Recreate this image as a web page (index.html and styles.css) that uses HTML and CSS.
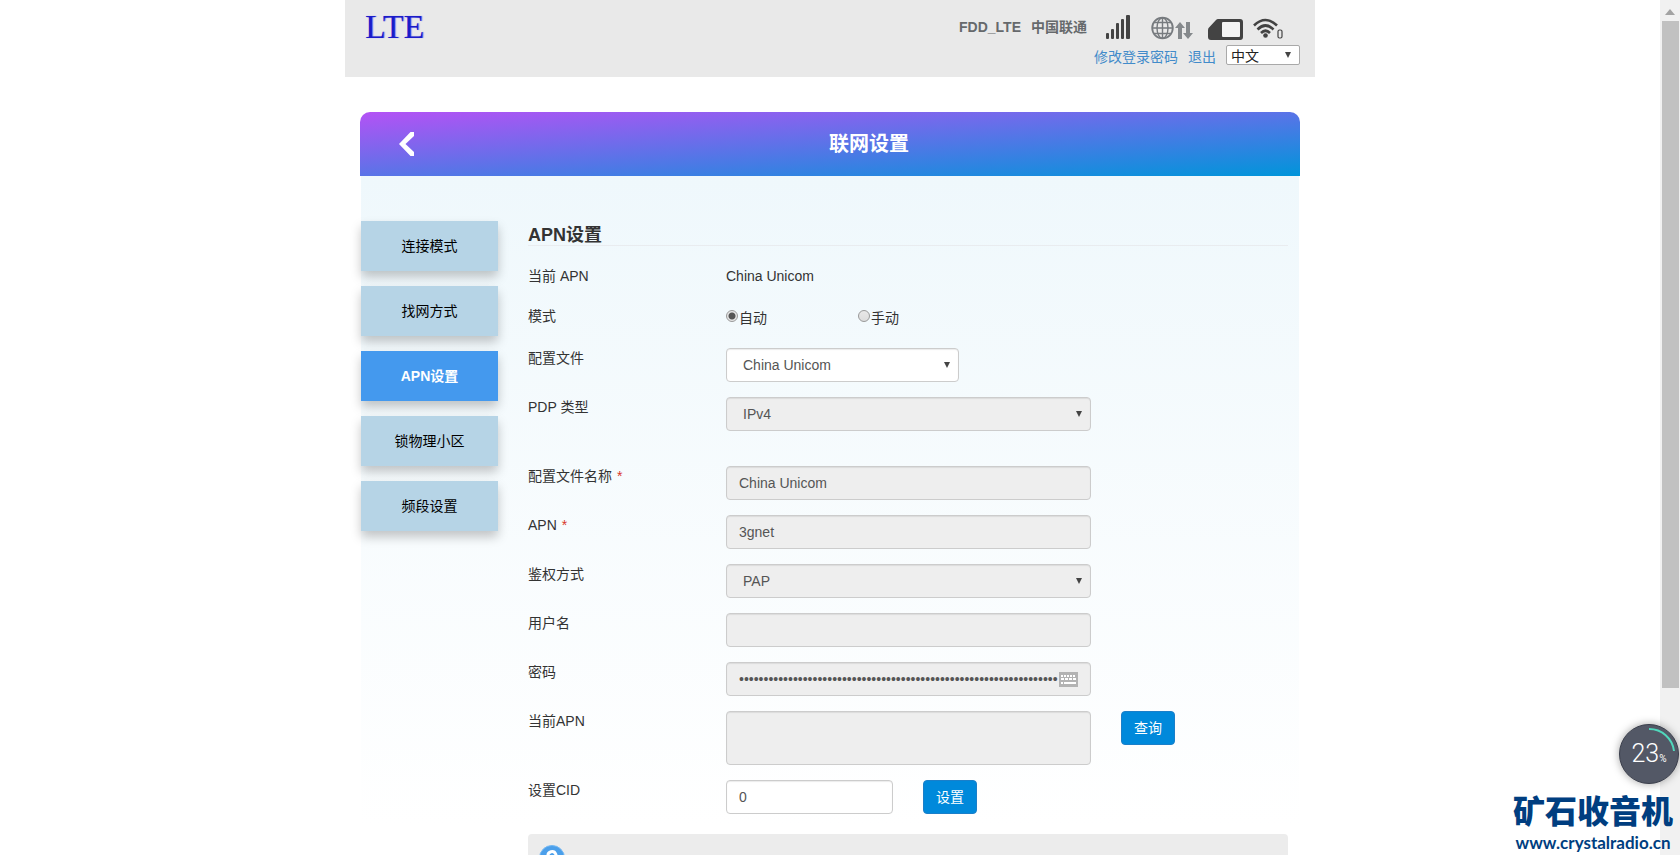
FILE: index.html
```html
<!DOCTYPE html>
<html lang="zh-CN">
<head>
<meta charset="utf-8">
<title>联网设置</title>
<link rel="stylesheet" href="styles.css">
</head>
<body>
<div class="window">
  <div class="page">
    <header class="topbar">
      <div class="logo">LTE</div>
      <div class="tools">
        <div class="status">
          <span>FDD_LTE</span>
          <span>中国联通</span>
          <svg class="signal" width="24" height="24" viewBox="0 0 24 24" aria-hidden="true"><g fill="#434343"><rect x="0" y="18" width="3" height="6" rx="1"/><rect x="5" y="14" width="3" height="10" rx="1"/><rect x="10" y="8" width="3" height="16" rx="1"/><rect x="15" y="4" width="3" height="20" rx="1"/><rect x="20" y="0" width="4" height="24" rx="1"/></g></svg>
          <svg class="globe" width="42" height="24" viewBox="0 0 42 24" aria-hidden="true"><g fill="none" stroke="#777b7f" stroke-width="1.4"><circle cx="11.500" cy="12" r="10.300" stroke-width="1.800"/><ellipse cx="11.500" cy="12" rx="5.500" ry="10.300"/><path d="M11.500 2v20M1 12h21M3 6.500h17M3 17.500h17"/></g><path fill="#85898c" d="M29 6l5 6h-3v11h-4V12h-3zM37 23l-5-6h3V6h4v11h3z"/></svg>
          <svg class="sim" width="36" height="22" viewBox="0 0 36 22" aria-hidden="true"><path fill="#434343" d="M10 0h22a3 3 0 0 1 3 3v15a3 3 0 0 1-3 3H3a3 3 0 0 1-3-3V11Q0 9 1.500 8L8 1Q9 0 10 0z"/><rect x="14" y="3" width="18" height="15" rx="1" fill="#f4f4f4"/></svg>
          <svg class="wifi" width="30" height="22" viewBox="0 0 30 22" aria-hidden="true"><g fill="none" stroke="#434343" stroke-width="2.600"><path d="M1 7.500Q12.500-3.500 24 7.500"/><path d="M4.500 11.500Q12.500 3.500 20.500 11.500"/><path d="M8 15Q12.500 10.500 17 15"/></g><circle cx="12.500" cy="17.500" r="2.300" fill="#434343"/><rect x="25" y="12" width="4" height="8" rx="1.500" fill="none" stroke="#434343" stroke-width="1.200"/></svg>
        </div>
        <nav class="account">
          <a href="#password">修改登录密码</a>
          <a href="#logout">退出</a>
          <span class="pick pick-lang"><select aria-label="语言"><option>中文</option></select></span>
        </nav>
      </div>
    </header>

    <main class="panel">
      <div class="panel-head">
        <a class="back" href="#back" aria-label="返回"><svg width="16" height="24" viewBox="0 0 16 24"><path fill="#fff" d="M11.500 0H15V4L6.500 12L15 20v4h-3.500L0 12z"/></svg></a>
        <h1>联网设置</h1>
      </div>
      <div class="panel-body">
        <nav class="menu">
          <a href="#mode">连接模式</a>
          <a href="#search">找网方式</a>
          <a class="active" href="#apn">APN设置</a>
          <a href="#lock">锁物理小区</a>
          <a href="#band">频段设置</a>
        </nav>
        <form class="form">
          <h2>APN设置</h2>
          <div class="row row-text"><span class="label">当前 APN</span><span>China Unicom</span></div>
          <div class="row row-radio"><span class="label">模式</span>
            <label class="radio"><input type="radio" name="mode" checked>自动</label>
            <label class="radio"><input type="radio" name="mode">手动</label>
          </div>
          <div class="row"><label class="label" for="profile">配置文件</label><span class="pick pick-short"><select class="field" id="profile"><option>China Unicom</option></select></span></div>
          <div class="row row-gap"><label class="label" for="pdp">PDP 类型</label><span class="pick"><select class="field" id="pdp" disabled><option>IPv4</option></select></span></div>
          <div class="row"><label class="label" for="name">配置文件名称 <i>*</i></label><input class="field" id="name" type="text" value="China Unicom" disabled></div>
          <div class="row"><label class="label" for="apn">APN <i>*</i></label><input class="field" id="apn" type="text" value="3gnet" disabled></div>
          <div class="row"><label class="label" for="auth">鉴权方式</label><span class="pick"><select class="field" id="auth" disabled><option>PAP</option></select></span></div>
          <div class="row"><label class="label" for="user">用户名</label><input class="field" id="user" type="text" disabled></div>
          <div class="row"><label class="label" for="pass">密码</label><span class="secret"><input class="field" id="pass" type="password" autocomplete="off" value="00000000000000000000000000000000000000000000000000000000000000000" disabled><svg class="keys" width="19" height="15" viewBox="0 0 19 15" aria-hidden="true"><path fill="#b3b3b3" d="M0 0h19v15H0z"/><g fill="none" stroke="#fff" stroke-width="2"><path d="M2 4h15" stroke-dasharray="2 1"/><path d="M2 7h15" stroke-dasharray="3 1"/><path d="M2 11h2M5 11h12"/></g></svg></span></div>
          <div class="row"><label class="label" for="current">当前APN</label><textarea class="field" id="current" disabled></textarea><button class="btn" type="button">查询</button></div>
          <div class="row"><label class="label" for="cid">设置CID</label><input class="field field-cid" id="cid" type="text" value="0"><button class="btn" type="button">设置</button></div>
          <div class="help"><svg width="26" height="26" viewBox="0 0 26 26" aria-hidden="true"><circle cx="13" cy="13" r="12.500" fill="#4b9fea" stroke="#72b7f2"/><path d="M9 11a4 4 0 1 1 6 3q-2 1-2 3" fill="none" stroke="#fff" stroke-width="3"/><circle cx="13" cy="21" r="2" fill="#fff"/></svg></div>
        </form>
      </div>
    </main>
  </div>

  <div class="scroll" aria-hidden="true"><svg width="10" height="6" viewBox="0 0 10 6"><path fill="#a3a3a3" d="M5 0l5 6H0z"/></svg><div class="thumb"></div></div>

  <div class="ball">
    <svg class="arc" width="60" height="60" viewBox="0 0 60 60" aria-hidden="true"><path d="M30 5a25 25 0 0 1 25 22" fill="none" stroke="#50d8bc" stroke-width="2"/></svg>
    <span>23</span><small>%</small>
  </div>
  <div class="mark"><b>矿石收音机</b><span>www.crystalradio.cn</span></div>
</div>
</body>
</html>
```

FILE: styles.css
```css
* { box-sizing: border-box; }
body {
  margin: 0;
  background: #fff;
  color: #333;
  font: 14px/20px "Liberation Sans", "Noto Sans CJK SC", sans-serif;
}
input, select, textarea, button { font: inherit; color: inherit; margin: 0; }
a { color: #428bca; text-decoration: none; }
.window { display: flex; height: 100vh; overflow: hidden; position: relative; }
.page { flex: 1; min-width: 0; }

/* header */
.topbar {
  display: flex;
  justify-content: space-between;
  max-width: 970px;
  height: 77px;
  margin: 0 auto;
  padding: 8px 15px 0 20px;
  background: #e9e9e9;
}
.logo {
  color: #1c1cc8;
  font: 34px/38px "Liberation Serif", serif;
  text-shadow: 1px 0 1px #8080f0;
}
.tools { display: flex; flex-direction: column; align-items: flex-end; }
.status { display: flex; align-items: center; height: 37px; padding-right: 17px; color: #66696c; font-weight: bold; }
.status span { margin-right: 10px; }
.status .signal { margin-left: 9px; margin-top: 1px; }
.globe { margin-left: 21px; margin-top: 3px; }
.sim { margin-left: 15px; margin-top: 6px; }
.wifi { margin-left: 9px; margin-top: 4px; }
.account { display: flex; align-items: flex-start; gap: 10px; }
.account a { padding-top: 2px; }
.pick { position: relative; display: block; width: 365px; }
.pick::after {
  content: "";
  position: absolute;
  right: 9px;
  top: 14px;
  border: solid transparent;
  border-width: 6px 3px 0;
  border-top-color: #444;
  pointer-events: none;
}
.pick select { display: block; width: 100%; appearance: none; opacity: 1; }
.pick-short { width: 233px; }
.pick-lang { width: 74px; }
.pick-lang::after { top: 7px; }
.pick-lang select { height: 20px; padding: 0 4px; border: 1px solid #a9a9a9; border-radius: 2px; background: #fff; color: #222; }

/* panel */
.panel { max-width: 940px; margin: 35px auto 0; }
.panel-head {
  display: flex;
  align-items: center;
  height: 64px;
  border-radius: 10px 10px 0 0;
  background: linear-gradient(to bottom right, #b452f5, #0095da);
  color: #fff;
}
.back { flex: 0 0 78px; display: flex; justify-content: flex-end; padding-right: 23px; }
.panel-head h1 { flex: 1; margin: 0; font-size: 20px; line-height: 28px; text-align: center; }
.panel-body {
  display: flex;
  gap: 30px;
  margin: 0 1px;
  padding: 45px 11px 0 0;
  background: linear-gradient(#eff8fc, #fff 650px);
}
.menu { flex: 0 0 137px; display: flex; flex-direction: column; gap: 15px; }
.menu a {
  display: flex;
  align-items: center;
  justify-content: center;
  height: 50px;
  background: #b6d4e6;
  color: #000;
  box-shadow: 0 6px 10px rgba(0, 0, 0, .22);
}
.menu .active { background: #4499ee; color: #fff; font-weight: bold; }

/* form */
.form { flex: 1; min-width: 0; }
.form h2 { margin: 0 0 20px; padding-top: 4px; border-bottom: 1px solid #e9ecef; font-size: 18px; line-height: 20px; }
.row { display: flex; align-items: flex-start; margin-bottom: 15px; }
.row-text { height: 25px; }
.row-radio { height: 27px; }
.row-gap { margin-bottom: 35px; }
.label { flex: 0 0 198px; }
.label i { margin-left: 1px; color: #d9362b; font-style: normal; }
.radio { display: flex; width: 132px; gap: 1px; padding-top: 2px; }
.radio input {
  appearance: none;
  width: 12px;
  height: 12px;
  margin-top: 2px;
  border: 1px solid #999;
  border-radius: 50%;
  background: linear-gradient(#e8e8e8, #ddd);
}
.radio input:checked { background: radial-gradient(circle, #555 3px, #e6e6e6 4px); }
.field {
  display: block;
  width: 365px;
  height: 34px;
  padding: 6px 12px;
  border: 1px solid #ccc;
  border-radius: 4px;
  background: #fff;
  box-shadow: inset 0 1px 1px rgba(0, 0, 0, .08);
  color: #555;
}
.field:disabled { background: #eee; }
.pick .field { padding-left: 16px; }
textarea.field { height: 54px; resize: none; }
.field-cid { width: 167px; }
.btn {
  width: 54px;
  height: 34px;
  margin-left: 30px;
  padding: 0;
  border: 1px solid #1b7fc9;
  border-radius: 4px;
  background: #0089db;
  color: #fff;
}
.secret { position: relative; }
.secret .field { padding-right: 32px; }
.keys { position: absolute; right: 13px; top: 10px; }
.help { height: 100px; margin-top: 20px; padding: 11px; border-radius: 4px; background: #ececec; }

/* window overlays */
.scroll { flex: 0 0 20px; display: flex; flex-direction: column; align-items: center; padding-top: 9px; background: #f1f1f1; }
.thumb { width: 17px; height: 78vh; margin-top: 6px; background: #c1c1c1; }
.ball {
  position: absolute;
  right: 1px;
  bottom: 71px;
  display: flex;
  align-items: baseline;
  justify-content: center;
  width: 60px;
  height: 60px;
  border: 1px solid #3b3f4c;
  border-radius: 50%;
  background: #535866;
  box-shadow: 0 0 8px rgba(0, 0, 0, .35);
  color: #fff;
  font: 300 25px/58px Roboto, sans-serif;
}
.ball small { font-size: 10px; font-weight: 400; }
.arc { position: absolute; inset: -1px; }
.mark {
  position: absolute;
  right: 7px;
  bottom: 2px;
  display: flex;
  flex-direction: column;
  align-items: center;
  gap: 6px;
  color: #003e80;
  text-shadow: 0 0 2px #fff;
}
.mark b { font: 900 32px/36px "Noto Sans CJK SC", sans-serif; }
.mark span { font: bold 17px/20px Lato, sans-serif; }
```
